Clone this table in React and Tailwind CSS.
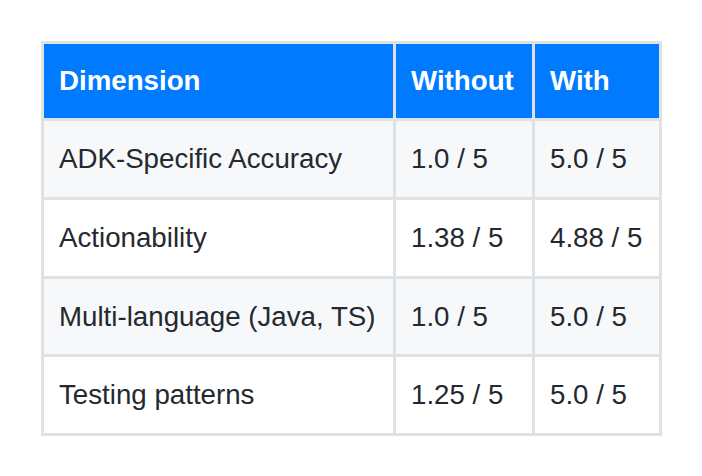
import { Fragment } from "react";

const rows = [
  ["ADK-Specific Accuracy", "1.0 / 5", "5.0 / 5"],
  ["Actionability", "1.38 / 5", "4.88 / 5"],
  ["Multi-language (Java, TS)", "1.0 / 5", "5.0 / 5"],
  ["Testing patterns", "1.25 / 5", "5.0 / 5"],
];

function HeadCell({ children }) {
  return (
    <div className="flex items-center h-[74px] px-[15px] bg-[#007bff] text-white font-bold">
      {children}
    </div>
  );
}

function Cell({ children, striped }) {
  return (
    <div
      className={
        striped
          ? "flex items-center h-[75.8px] px-[15px] bg-[#f6f8fa] text-[#24292f]"
          : "flex items-center h-[75.8px] px-[15px] bg-white text-[#24292f]"
      }
    >
      {children}
    </div>
  );
}

export default function App() {
  return (
    <div className="w-[702px] h-[476px] bg-white pt-[41px] pl-[41px] font-['Liberation_Sans',Arial,sans-serif] text-[27.7px] leading-none">
      <div className="grid w-fit grid-cols-[349px_136px_124px] gap-[3px] p-[3px] bg-[#dfe2e5]">
        <HeadCell>Dimension</HeadCell>
        <HeadCell>Without</HeadCell>
        <HeadCell>With</HeadCell>
        {rows.map((r, i) => (
          <Fragment key={r[0]}>
            <Cell striped={i % 2 === 0}>{r[0]}</Cell>
            <Cell striped={i % 2 === 0}>{r[1]}</Cell>
            <Cell striped={i % 2 === 0}>{r[2]}</Cell>
          </Fragment>
        ))}
      </div>
    </div>
  );
}
